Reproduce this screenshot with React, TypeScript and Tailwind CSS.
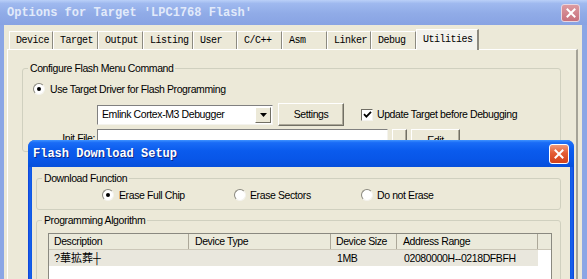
import React from "react";

const txt = "text-[10.5px] tracking-[-0.4px] leading-[13px]";

function Radio({ checked }: { checked?: boolean }) {
  return (
    <span className="relative shrink-0 w-[12px] h-[12px] rounded-full bg-white border border-t-[#8a887e] border-l-[#8a887e] border-r-[#f4f3ee] border-b-[#f4f3ee] flex items-center justify-center">
      {checked && <span className="w-[4px] h-[4px] rounded-full bg-black" />}
    </span>
  );
}

function Check() {
  return (
    <span className="shrink-0 w-[12px] h-[12px] bg-white border border-t-[#6f6d64] border-l-[#6f6d64] border-r-[#f4f3ee] border-b-[#f4f3ee] flex items-center justify-center">
      <svg width="9" height="9" viewBox="0 0 9 9">
        <path d="M1 4.2 L3.4 6.6 L8 1.8" stroke="#000" strokeWidth="1.8" fill="none" />
      </svg>
    </span>
  );
}

function CloseBtn({ inactive }: { inactive?: boolean }) {
  return (
    <div
      className={
        inactive
          ? "ml-auto w-[19px] h-[18px] rounded-[3px] border border-[#e8d6e0] bg-[linear-gradient(to_bottom,#dc9aa0,#c7707c)] flex items-center justify-center"
          : "ml-auto w-[20px] h-[20px] rounded-[3px] border border-white bg-[linear-gradient(to_bottom,#f09a7c_0%,#e45c34_45%,#d2421c_100%)] flex items-center justify-center"
      }
    >
      <svg width="10" height="10" viewBox="0 0 10 10">
        <path d="M1.5 1.5 L8.5 8.5 M8.5 1.5 L1.5 8.5" stroke="#fff" strokeWidth="2" strokeLinecap="square" />
      </svg>
    </div>
  );
}

const tabs: [string, number][] = [
  ["Device", 44],
  ["Target", 45],
  ["Output", 45],
  ["Listing", 50],
  ["User", 44],
  ["C/C++", 45],
  ["Asm", 45],
  ["Linker", 44],
  ["Debug", 45],
];

function Btn({ w, h, children }: { w: string; h: string; children?: React.ReactNode }) {
  return (
    <div
      className={`${w} ${h} shrink-0 bg-[#ece9d8] border border-t-white border-l-white border-r-[#716f64] border-b-[#716f64] shadow-[inset_-1px_-1px_0_#aca899] flex items-center justify-center ${txt}`}
    >
      {children}
    </div>
  );
}

export default function App() {
  return (
    <div className="relative w-[587px] h-[279px] overflow-hidden bg-[#ece9d8] font-['Liberation_Sans',Arial,sans-serif] text-black">
      {/* Outer window */}
      <div className="flex flex-col h-full">
        <div className="h-[25px] shrink-0 flex items-center pl-[7px] pr-[7px] bg-[linear-gradient(to_bottom,#bad0f8_0%,#9fb9ef_14%,#90abe7_55%,#88a3e3_100%)]">
          <span className="font-['Liberation_Mono',monospace] font-bold text-[12px] text-[#e2eafa] whitespace-pre">
            Options for Target 'LPC1768 Flash'
          </span>
          <CloseBtn inactive />
        </div>
        <div className="flex-1 flex flex-col border-l-4 border-r-[5px] border-[#8ba6e5] pl-[3px] pr-[4px] pt-[4px]">
          {/* Tabs */}
          <div className="flex items-end h-[20px] pl-[2px] relative z-10 font-['Liberation_Mono',monospace] text-[10px] tracking-[-0.5px]">
            {tabs.map(([t, w]) => (
              <div
                key={t}
                style={{ width: w }}
                className="h-[18px] shrink-0 border-l border-t border-l-white border-t-white border-r border-r-[#8c8a80] flex items-center pl-[6px] whitespace-pre"
              >
                {t}
              </div>
            ))}
            <div className="w-[63px] h-[21px] -mb-px shrink-0 bg-[#f3f2ec] border-l border-t border-l-white border-t-white border-r-2 border-r-[#8c8a80] flex items-center pl-[6px] pb-[1px]">
              Utilities
            </div>
          </div>
          {/* Panel */}
          <div className="flex-1 flex flex-col border-t border-l border-t-white border-l-white border-r-2 border-r-[#a5a397]">
            <fieldset className="ml-[14px] mt-[12px] w-[539px] border border-[#d0d0bf] rounded-[3px]">
              <legend className={`ml-[5px] px-[2px] ${txt}`}>Configure Flash Menu Command</legend>
              <div className={`mt-[7px] pl-[10px] flex items-center h-[14px] gap-[5px] ${txt}`}>
                <Radio checked />
                <span>Use Target Driver for Flash Programming</span>
              </div>
              <div className="mt-[7px] flex items-center h-[23px] pl-[74px]">
                <div className="w-[176px] h-[20px] shrink-0 bg-white border border-t-[#808080] border-l-[#808080] border-r-[#f4f3ee] border-b-[#f4f3ee] flex items-center">
                  <span className={`flex-1 pl-[4px] ${txt}`}>Emlink Cortex-M3 Debugger</span>
                  <div className="w-[16px] h-[16px] mr-[1px] bg-[#ece9d8] border border-t-white border-l-white border-r-[#716f64] border-b-[#716f64] flex items-center justify-center">
                    <svg width="7" height="4" viewBox="0 0 7 4">
                      <path d="M0 0 H7 L3.5 4 Z" fill="#000" />
                    </svg>
                  </div>
                </div>
                <div className="ml-[5px]">
                  <Btn w="w-[66px]" h="h-[23px]">Settings</Btn>
                </div>
                <div className="ml-[17px] flex items-center gap-[4px]">
                  <Check />
                  <span className={txt}>Update Target before Debugging</span>
                </div>
              </div>
              <div className="mt-[3px] flex items-start h-[22px]">
                <span className={`w-[72px] text-right pt-[3px] ${txt}`}>Init File:</span>
                <div className="ml-[2px] w-[291px] h-[21px] bg-white border border-t-[#808080] border-l-[#808080] border-r-[#f4f3ee] border-b-[#f4f3ee]" />
                <div className="ml-[4px]">
                  <Btn w="w-[15px]" h="h-[22px]">...</Btn>
                </div>
                <div className="ml-[4px]">
                  <Btn w="w-[49px]" h="h-[22px]">Edit</Btn>
                </div>
              </div>
            </fieldset>
          </div>
        </div>
      </div>

      {/* Inner dialog */}
      <div className="absolute left-[28px] top-[140px] w-[546px] h-[160px] rounded-t-[7px] overflow-hidden bg-[linear-gradient(to_right,#0a3fd6_0px,#1a62ec_2px,#0a55e3_4px,#0a55e3_542px,#1a62ec_544px,#0a3fd6_546px)] flex flex-col">
        <div className="h-[27px] shrink-0 flex items-center pl-[5px] pr-[5px] bg-[linear-gradient(to_bottom,#3f93ff_0%,#1a6cf6_10%,#0a5bed_40%,#0856e8_70%,#064fdb_100%)]">
          <span className="font-['Liberation_Mono',monospace] font-bold text-[12px] text-white whitespace-pre [text-shadow:1px_1px_0_#0a2a8a]">
            Flash Download Setup
          </span>
          <CloseBtn />
        </div>
        <div className="flex-1 mx-[4px] bg-[#ece9d8] flex flex-col">
          <fieldset className="ml-[4px] mt-[5px] w-[525px] border border-[#d0d0bf] rounded-[3px] pb-[7px]">
            <legend className={`ml-[5px] px-[2px] ${txt}`}>Download Function</legend>
            <div className={`mt-[3px] h-[14px] flex items-center pl-[65px] ${txt}`}>
              <div className="w-[132px] flex items-center gap-[5px]">
                <Radio checked />
                <span>Erase Full Chip</span>
              </div>
              <div className="w-[127px] flex items-center gap-[4px]">
                <Radio />
                <span>Erase Sectors</span>
              </div>
              <div className="flex items-center gap-[4px]">
                <Radio />
                <span>Do not Erase</span>
              </div>
            </div>
          </fieldset>
          <fieldset className="ml-[4px] mt-[4px] w-[525px] border border-[#d0d0bf] rounded-[3px] pb-[8px]">
            <legend className={`ml-[5px] px-[2px] ${txt}`}>Programming Algorithm</legend>
            <div className="ml-[11px] mt-[6px] w-[504px] h-[60px] border border-[#8a8980] bg-white flex flex-col">
              <div className={`flex h-[16px] bg-[#ebeadb] border-b border-[#cbc7b8] ${txt}`}>
                <div className="w-[140px] pl-[5px] border-r border-r-[#aca899] flex items-center">Description</div>
                <div className="w-[142px] pl-[6px] border-r border-r-[#aca899] flex items-center">Device Type</div>
                <div className="w-[66px] pl-[5px] border-r border-r-[#aca899] flex items-center">Device Size</div>
                <div className="w-[141px] pl-[6px] border-r border-r-[#aca899] flex items-center">Address Range</div>
                <div className="flex-1" />
              </div>
              <div className={`flex h-[16px] w-[489px] bg-[#e9e7dd] items-center ${txt}`}>
                <div className="w-[140px] pl-[5px] font-['Liberation_Sans','Noto_Sans_CJK_SC',sans-serif] text-[11px] tracking-normal">?華拡葬┼</div>
                <div className="w-[142px]" />
                <div className="w-[66px] pl-[6px]">1MB</div>
                <div className="w-[141px] pl-[7px]">02080000H--0218DFBFH</div>
              </div>
            </div>
          </fieldset>
        </div>
      </div>
    </div>
  );
}
